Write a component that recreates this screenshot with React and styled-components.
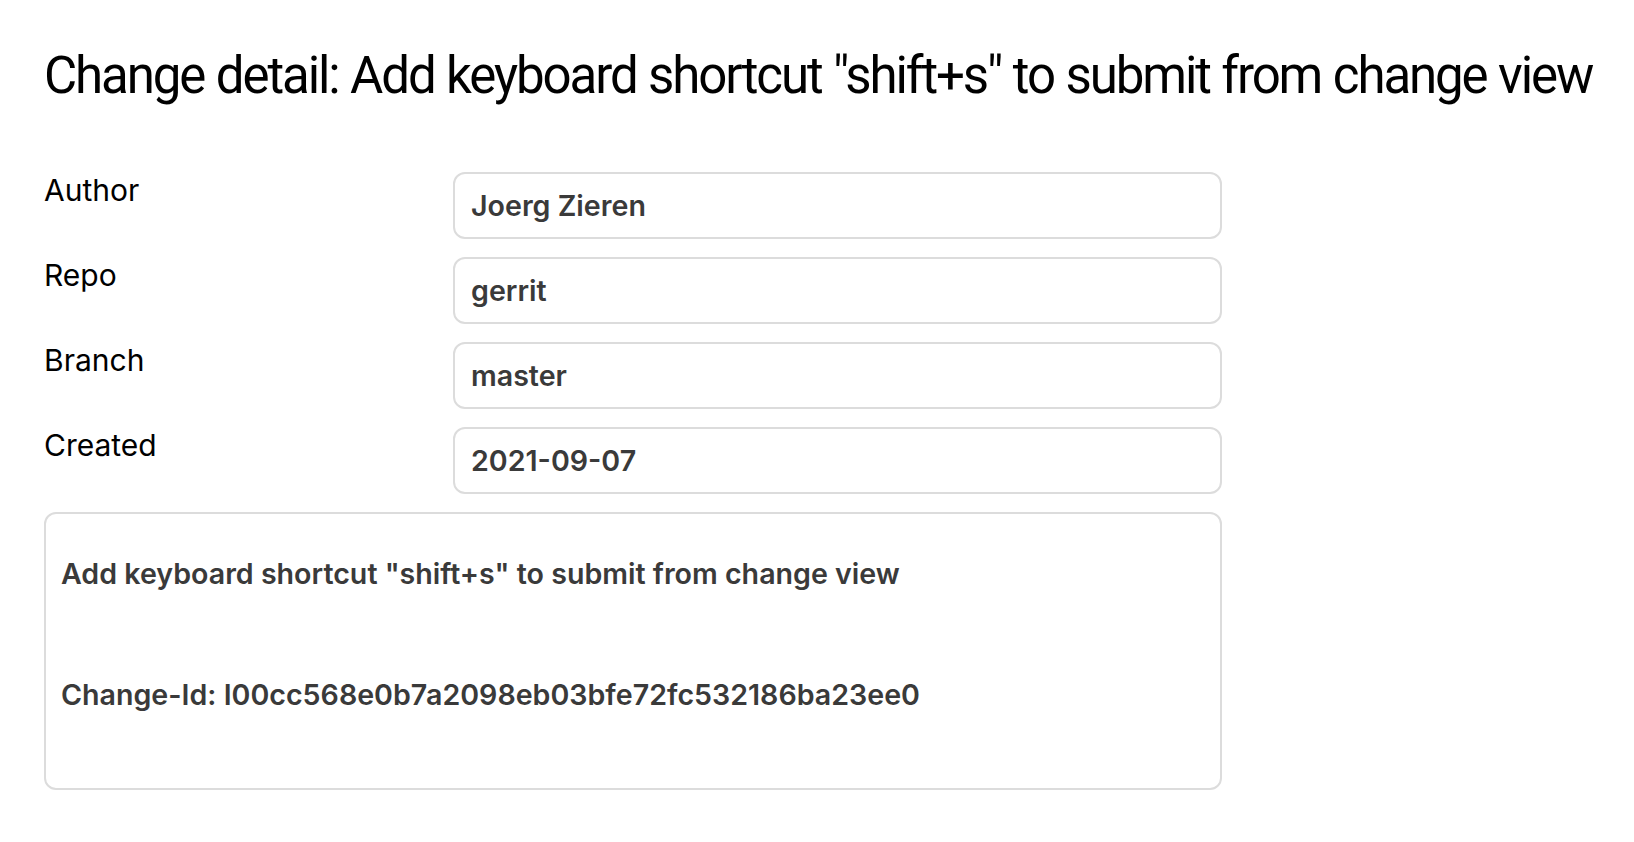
import React from 'react';
import styled, { createGlobalStyle } from 'styled-components';

const GlobalStyle = createGlobalStyle`
    html, body {
        margin: 0;
        padding: 0;
        background: #ffffff;
    }
    body {
        font-family: Inter, "Noto Sans", "Liberation Sans", sans-serif;
        color: #000;
    }
`;

const Page = styled.div`
    padding: 45px 44px 40px 44px;
`;

const Title = styled.h1`
    margin: 0 0 65px 0;
    font-family: Roboto, "Liberation Sans", sans-serif;
    font-size: 51px;
    font-weight: 400;
    letter-spacing: -2.1px;
    word-spacing: 1px;
    line-height: 62px;
    color: #000;
    white-space: nowrap;
`;

const Form = styled.div`
    width: 1178px;
    display: grid;
    grid-template-columns: 409px 769px;
    row-gap: 18px;
`;

const Label = styled.div`
    font-size: 30px;
    line-height: 36px;
    color: #000;
`;

const Field = styled.div`
    box-sizing: border-box;
    height: 67px;
    display: flex;
    align-items: center;
    padding: 0 16px;
    border: 2px solid #dcdcdc;
    border-radius: 12px;
    font-size: 28.6px;
    font-weight: 600;
    line-height: 34px;
    color: #3a3a3a;
`;

const Message = styled.div`
    grid-column: 1 / -1;
    box-sizing: border-box;
    padding: 43px 15px 76px 15px;
    border: 2px solid #dcdcdc;
    border-radius: 12px;
    font-size: 28.6px;
    font-weight: 600;
    line-height: 34px;
    color: #3a3a3a;
`;

const Line = styled.p`
    margin: 0;
    & + & {
        margin-top: 87px;
    }
`;

const fields = [
    { label: 'Author', value: 'Joerg Zieren' },
    { label: 'Repo', value: 'gerrit' },
    { label: 'Branch', value: 'master' },
    { label: 'Created', value: '2021-09-07' },
];

const App = () => {
    return (
        <Page>
            <GlobalStyle />
            <Title>Change detail: Add keyboard shortcut "shift+s" to submit from change view</Title>
            <Form>
                {fields.map((f) => (
                    <React.Fragment key={f.label}>
                        <Label>{f.label}</Label>
                        <Field>{f.value}</Field>
                    </React.Fragment>
                ))}
                <Message>
                    <Line>Add keyboard shortcut "shift+s" to submit from change view</Line>
                    <Line>Change-Id: I00cc568e0b7a2098eb03bfe72fc532186ba23ee0</Line>
                </Message>
            </Form>
        </Page>
    );
};

export default App;
